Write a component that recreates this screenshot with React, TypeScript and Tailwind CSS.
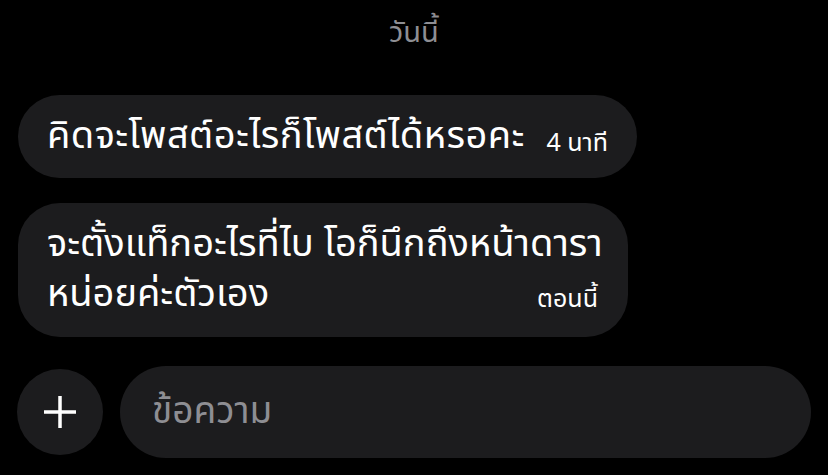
import React from 'react';

const thai = { fontFamily: '"Noto Sans Thai", "Noto Sans Thai Looped", "Noto Sans", "DejaVu Sans", sans-serif' };

export default function App() {
  return (
    <div className="w-[828px] h-[475px] bg-black overflow-hidden flex flex-col" style={thai}>
      <div className="h-[66px] flex items-center justify-center text-[29px] text-[#8e8e93] leading-none">วันนี้</div>

      <div className="flex flex-col items-start gap-[25px] px-[18px] pt-[29px]">
        <div className="h-[83px] w-[619px] rounded-full bg-[#1c1c1e] flex items-center pl-[29px] pr-[29px]">
          <span className="text-white text-[38px] leading-none tracking-[0.45px]">คิดจะโพสต์อะไรก็โพสต์ได้หรอคะ</span>
          <span className="ml-auto text-white text-[25px] leading-none mt-[14px]">4 นาที</span>
        </div>

        <div className="w-[610px] h-[134px] rounded-[42px] bg-[#1c1c1e] pl-[29px] pr-[30px] pt-[17px]">
          <div className="text-white text-[38px] leading-[50px] whitespace-nowrap">จะตั้งแท็กอะไรที่ไบ โอก็นึกถึงหน้าดารา</div>
          <div className="flex items-end">
            <span className="text-white text-[38px] leading-[50px] whitespace-nowrap">หน่อยค่ะตัวเอง</span>
            <span className="ml-auto text-white text-[25px] leading-none mb-[8px] whitespace-nowrap">ตอนนี้</span>
          </div>
        </div>
      </div>

      <div className="flex items-center gap-[17px] pl-[17px] pr-[17px] mt-[29px]">
        <div className="w-[86px] h-[86px] rounded-full bg-[#1c1c1e] flex items-center justify-center shrink-0">
          <svg width="34" height="34" viewBox="0 0 34 34">
            <path d="M17 1v32M1 17h32" stroke="white" strokeWidth="3.5" />
          </svg>
        </div>
        <div className="flex-1 h-[92px] rounded-full bg-[#1c1c1e] flex items-center pl-[32px]">
          <span className="text-[#8e8e93] text-[37px] leading-none">ข้อความ</span>
        </div>
      </div>
    </div>
  );
}
